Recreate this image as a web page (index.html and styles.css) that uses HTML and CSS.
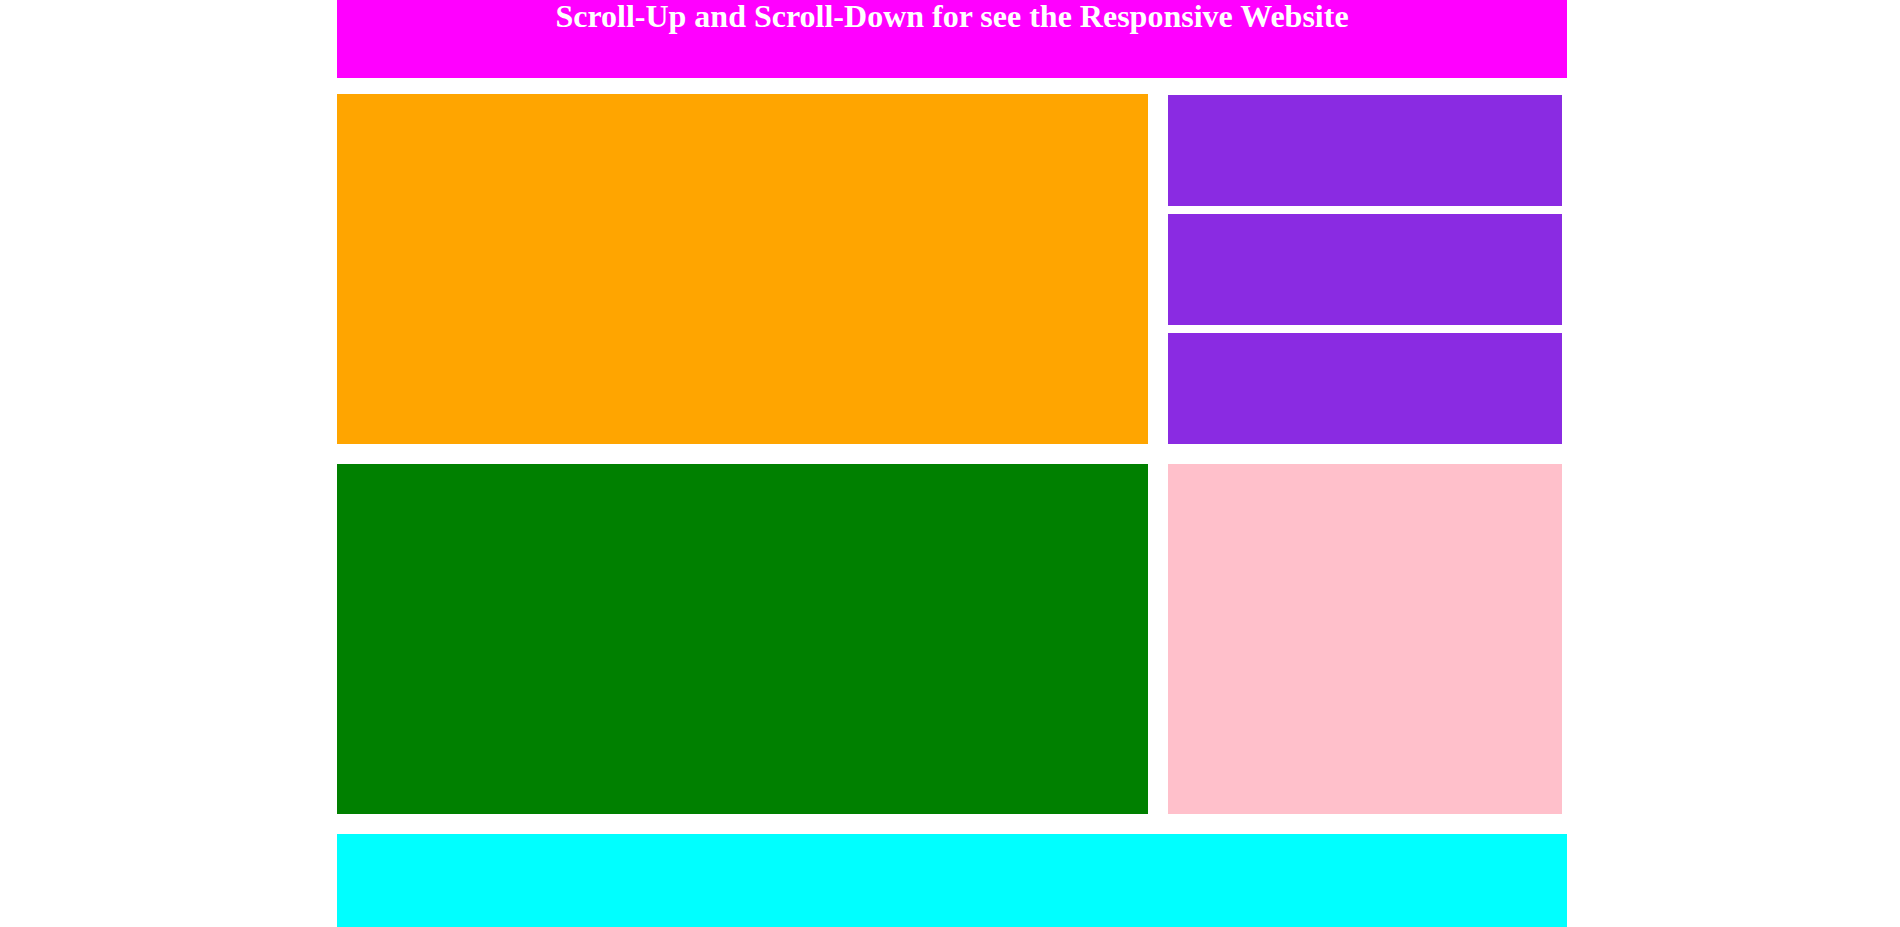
FILE: index.html
```html
<!DOCTYPE html>
<html>
<head>
<meta charset="utf-8">
<link rel="stylesheet" href="styles.css">
</head>
<body>
<div class="container">
  <header class="header"><h1 class="title">Scroll-Up and Scroll-Down for see the Responsive Website</h1></header>
  <div class="row row-top">
    <div class="main orange"></div>
    <div class="side">
      <div class="purple"></div>
      <div class="purple"></div>
      <div class="purple"></div>
    </div>
  </div>
  <div class="row row-mid">
    <div class="main green"></div>
    <div class="side"><div class="pink"></div></div>
  </div>
  <footer class="footer"></footer>
</div>
</body>
</html>
```

FILE: styles.css
```css
html, body {
  margin: 0;
  padding: 0;
  background: #ffffff;
}
body {
  padding-left: 4px;
  font-family: "Liberation Serif", "Times New Roman", serif;
}
.container {
  width: 1230px;
  margin: 0 auto;
}
.header {
  background: #ff00ff;
  height: 78px;
}
.title {
  margin: 0;
  color: #ffffff;
  font-size: 32px;
  font-weight: bold;
  text-align: center;
  line-height: 32px;
}
.row {
  display: flex;
  gap: 20px;
  height: 350px;
}
.row-top {
  margin-top: 16px;
}
.row-mid {
  margin-top: 20px;
}
.main {
  width: 811px;
}
.orange { background: #ffa500; }
.green { background: #008000; }
.side {
  width: 394px;
  display: flex;
  flex-direction: column;
  gap: 8px;
}
.row-top .side {
  padding-top: 1px;
}
.purple {
  background: #8a2be2;
  height: 111px;
}
.pink {
  background: #ffc0cb;
  height: 350px;
}
.footer {
  margin-top: 20px;
  background: #00ffff;
  height: 120px;
}
```
